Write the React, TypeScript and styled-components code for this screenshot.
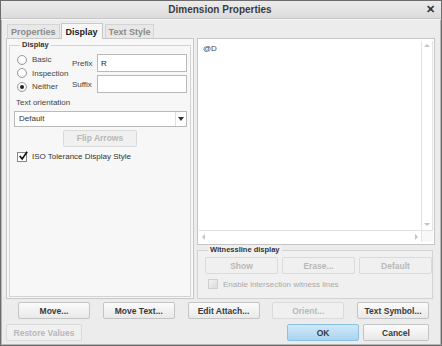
import React from "react";
import styled, { createGlobalStyle } from "styled-components";

const Global = createGlobalStyle`
  html, body { margin: 0; padding: 0; background: #ffffff; }
  * { box-sizing: border-box; }
  body { font-family: "Liberation Sans", Arial, sans-serif; font-size: 8px; color: #333; }
`;

const Dialog = styled.div`
  width: 442px;
  height: 346px;
  border: 1px solid #6c6c6c;
  background: #ececec;
  display: flex;
  flex-direction: column;
  box-shadow: inset 0 0 0 1px #b4b4b4;
`;

const TitleBar = styled.div`
  height: 18px;
  display: grid;
  grid-template-columns: 1fr auto 1fr;
  align-items: center;
  background: linear-gradient(#ebebeb, #dcdcdc);
  border-bottom: 1px solid #c6c6c6;
  padding: 0 4px 0 2px;
`;

const Title = styled.div`
  grid-column: 2;
  font-size: 10px;
  font-weight: bold;
  color: #3c3c3c;
`;

const Close = styled.div`
  grid-column: 3;
  justify-self: end;
  font-size: 11px;
  font-weight: bold;
  color: #333;
  line-height: 1;
  padding-right: 2px;
`;

const Body = styled.div`
  flex: 1;
  display: flex;
  flex-direction: column;
  padding: 2px 5px 0 5px;
  border-top: 1px solid #f7f7f7;
`;

const TabRow = styled.div`
  display: flex;
  align-items: flex-end;
  height: 16px;
  padding-left: 1px;
`;

const Tab = styled.div<{ $active?: boolean }>`
  height: ${(p) => (p.$active ? 16 : 14)}px;
  padding: 0 ${(p) => (p.$active ? 4 : 3)}px;
  margin-right: ${(p) => (p.$active ? 2 : 1)}px;
  display: flex;
  align-items: center;
  font-size: 9px;
  font-weight: bold;
  color: ${(p) => (p.$active ? "#222" : "#8a8a8a")};
  background: ${(p) => (p.$active ? "#f7f7f7" : "#e8e8e8")};
  border: 1px solid ${(p) => (p.$active ? "#c8c8c8" : "#d4d4d4")};
  border-bottom: none;
  margin-bottom: ${(p) => (p.$active ? -1 : 0)}px;
  position: relative;
  z-index: ${(p) => (p.$active ? 1 : 0)};
`;

const MainRow = styled.div`
  display: flex;
  gap: 3px;
  height: 261px;
`;

const LeftPanel = styled.div`
  width: 188px;
  border: 1px solid #c8c8c8;
  background: #f7f7f7;
  display: flex;
  flex-direction: column;
  padding: 0 2px 1px 2px;
`;

const Group = styled.div<{ $fill?: boolean }>`
  border: 1px solid #d2d2d2;
  margin-top: 6px;
  flex: ${(p) => (p.$fill ? 1 : "none")};
  display: flex;
  flex-direction: column;
`;

const Legend = styled.div<{ $bg: string; $left: number }>`
  align-self: flex-start;
  margin: -6px 0 0 ${(p) => p.$left}px;
  padding: 0 2px;
  height: 10px;
  line-height: 10px;
  font-size: 7.5px;
  font-weight: bold;
  color: #333;
  background: ${(p) => p.$bg};
`;

const TopSection = styled.div`
  display: flex;
  padding-left: 7px;
  margin-top: 3px;
`;

const RadioList = styled.div`
  width: 55px;
  display: flex;
  flex-direction: column;
`;

const RadioRow = styled.label`
  height: 13.5px;
  display: flex;
  align-items: center;
  gap: 5px;
  white-space: nowrap;
  color: #444;
`;

const RadioDot = styled.span<{ $checked?: boolean }>`
  width: 10px;
  height: 10px;
  border-radius: 50%;
  border: 1px solid #9c9c9c;
  background: radial-gradient(circle at 50% 40%, #ffffff 40%, #e4e4e4 100%);
  display: flex;
  align-items: center;
  justify-content: center;
  flex: none;
  &::after {
    content: "";
    width: 4px;
    height: 4px;
    border-radius: 50%;
    background: ${(p) => (p.$checked ? "#222" : "transparent")};
  }
`;

const FieldGrid = styled.div`
  display: grid;
  grid-template-columns: 25px 90px;
  row-gap: 3px;
  margin-top: 1px;
  align-items: center;
`;

const FieldLabel = styled.span`
  color: #444;
`;

const TextInput = styled.div`
  height: 18px;
  background: #ffffff;
  border: 1px solid #b9b9b9;
  display: flex;
  align-items: center;
  padding-left: 3px;
  font-size: 8px;
  color: #222;
`;

const SectionLabel = styled.div`
  height: 10px;
  line-height: 10px;
  margin: 4px 0 0 6px;
  color: #444;
`;

const Select = styled.div`
  height: 16px;
  margin: 3px 3px 0 4px;
  background: #ffffff;
  border: 1px solid #b9b9b9;
  display: flex;
  align-items: center;
`;

const SelectText = styled.span`
  flex: 1;
  padding-left: 4px;
  color: #333;
`;

const SelectArrow = styled.span`
  width: 11px;
  height: 100%;
  border-left: 1px solid #dedede;
  display: flex;
  align-items: center;
  justify-content: center;
  &::after {
    content: "";
    border-left: 3px solid transparent;
    border-right: 3px solid transparent;
    border-top: 4px solid #333;
  }
`;

const Button = styled.div<{ $disabled?: boolean; $primary?: boolean; $w?: number }>`
  width: ${(p) => p.$w ?? 72}px;
  height: 17px;
  display: flex;
  align-items: center;
  justify-content: center;
  font-size: 8.5px;
  font-weight: bold;
  white-space: nowrap;
  border-radius: 2px;
  color: ${(p) => (p.$disabled ? "#b8b8b8" : "#3a3a3a")};
  border: 1px solid
    ${(p) => (p.$primary ? "#8cc0e4" : p.$disabled ? "#dadada" : "#c4c4c4")};
  background: ${(p) =>
    p.$primary
      ? "linear-gradient(#cfe8f8, #a9d4f1)"
      : p.$disabled
      ? "#f0f0f0"
      : "linear-gradient(#fbfbfb, #e9e9e9)"};
`;

const CenterRow = styled.div`
  display: flex;
  justify-content: center;
  margin-top: 3px;
`;

const CheckRow = styled.label<{ $disabled?: boolean; $top: number; $left: number }>`
  height: 10px;
  display: flex;
  align-items: center;
  gap: 5px;
  margin: ${(p) => p.$top}px 0 0 ${(p) => p.$left}px;
  color: ${(p) => (p.$disabled ? "#aaaaaa" : "#333")};
  white-space: nowrap;
`;

const CheckBox = styled.span<{ $disabled?: boolean }>`
  width: 10px;
  height: 10px;
  flex: none;
  border: 1px solid ${(p) => (p.$disabled ? "#cfcfcf" : "#8a8a8a")};
  background: ${(p) =>
    p.$disabled ? "linear-gradient(135deg, #f2f2f2, #dcdcdc)" : "#ffffff"};
  display: flex;
  align-items: center;
  justify-content: center;
  overflow: visible;
`;

const RightCol = styled.div`
  flex: 1;
  display: flex;
  flex-direction: column;
  padding-right: 1px;
`;

const TextArea = styled.div`
  height: 207px;
  border: 1px solid #c6c6c6;
  background: #ffffff;
  display: grid;
  grid-template-columns: 1fr 12px;
  grid-template-rows: 1fr 12px;
  padding: 2px 1px 2px 1px;
`;

const AreaContent = styled.div`
  padding: 3px 0 0 4px;
  font-size: 8px;
  color: #444;
`;

const VScroll = styled.div`
  border-left: 1px solid #e2e2e2;
  border-right: 1px solid #e2e2e2;
  display: flex;
  flex-direction: column;
  justify-content: space-between;
  align-items: center;
  padding: 3px 0 4px;
`;

const HScroll = styled.div`
  border-top: 1px solid #e2e2e2;
  display: flex;
  justify-content: space-between;
  align-items: center;
  padding: 0 3px 0 3px;
`;

const Corner = styled.div`
  border-top: 1px solid #e2e2e2;
  border-left: 1px solid #e2e2e2;
  background: #f8f8f8;
`;

const Arrow = styled.span<{ $dir: "up" | "down" | "left" | "right" }>`
  width: 0;
  height: 0;
  ${(p) =>
    p.$dir === "up"
      ? "border-left: 3px solid transparent; border-right: 3px solid transparent; border-bottom: 3px solid #c4c4c4;"
      : p.$dir === "down"
      ? "border-left: 3px solid transparent; border-right: 3px solid transparent; border-top: 3px solid #c4c4c4;"
      : p.$dir === "left"
      ? "border-top: 3px solid transparent; border-bottom: 3px solid transparent; border-right: 3px solid #c4c4c4;"
      : "border-top: 3px solid transparent; border-bottom: 3px solid transparent; border-left: 3px solid #c4c4c4;"}
`;

const WitnessGroup = styled(Group)`
  margin-top: 5px;
  margin-right: 2px;
  flex: 1;
  padding-bottom: 6px;
  background: #f0f0f0;
`;

const WitnessButtons = styled.div`
  display: flex;
  gap: 4px;
  margin: 2px 0 0 7px;
`;

const ButtonRow = styled.div`
  display: flex;
  justify-content: space-between;
  padding: 0 7px 0 12px;
  margin-top: 3px;
`;

const BottomRow = styled.div`
  display: flex;
  align-items: center;
  margin-top: 5px;
  padding-right: 7px;
  gap: 4px;
`;

const Spacer = styled.div`
  flex: 1;
`;

const Check = () => (
  <svg width="12" height="12" viewBox="0 0 12 12" style={{ marginTop: -2, marginRight: -2 }}>
    <path d="M2 6 L5 9.5 L11 1" fill="none" stroke="#111" strokeWidth="2" />
  </svg>
);

export default function App() {
  return (
    <>
      <Global />
      <Dialog>
        <TitleBar>
          <Title>Dimension Properties</Title>
          <Close>✕</Close>
        </TitleBar>
        <Body>
          <TabRow>
            <Tab>Properties</Tab>
            <Tab $active>Display</Tab>
            <Tab>Text Style</Tab>
          </TabRow>
          <MainRow>
            <LeftPanel>
              <Group $fill>
                <Legend $bg="#f7f7f7" $left={10}>Display</Legend>
                <TopSection>
                  <RadioList>
                    <RadioRow><RadioDot />Basic</RadioRow>
                    <RadioRow><RadioDot />Inspection</RadioRow>
                    <RadioRow><RadioDot $checked />Neither</RadioRow>
                  </RadioList>
                  <FieldGrid>
                    <FieldLabel>Prefix</FieldLabel>
                    <TextInput>R</TextInput>
                    <FieldLabel>Suffix</FieldLabel>
                    <TextInput />
                  </FieldGrid>
                </TopSection>
                <SectionLabel>Text orientation</SectionLabel>
                <Select>
                  <SelectText>Default</SelectText>
                  <SelectArrow />
                </Select>
                <CenterRow>
                  <Button $disabled $w={74}>Flip Arrows</Button>
                </CenterRow>
                <CheckRow $top={5} $left={7}>
                  <CheckBox><Check /></CheckBox>
                  ISO Tolerance Display Style
                </CheckRow>
              </Group>
            </LeftPanel>
            <RightCol>
              <TextArea>
                <AreaContent>@D</AreaContent>
                <VScroll>
                  <Arrow $dir="up" />
                  <Arrow $dir="down" />
                </VScroll>
                <HScroll>
                  <Arrow $dir="left" />
                  <Arrow $dir="right" />
                </HScroll>
                <Corner />
              </TextArea>
              <WitnessGroup>
                <Legend $bg="#f0f0f0" $left={10}>Witnessline display</Legend>
                <WitnessButtons>
                  <Button $disabled $w={73}>Show</Button>
                  <Button $disabled $w={73}>Erase...</Button>
                  <Button $disabled $w={73}>Default</Button>
                </WitnessButtons>
                <CheckRow $disabled $top={5} $left={10}>
                  <CheckBox $disabled />
                  Enable intersection witness lines
                </CheckRow>
              </WitnessGroup>
            </RightCol>
          </MainRow>
          <ButtonRow>
            <Button>Move...</Button>
            <Button>Move Text...</Button>
            <Button>Edit Attach...</Button>
            <Button $disabled>Orient...</Button>
            <Button>Text Symbol...</Button>
          </ButtonRow>
          <BottomRow>
            <Button $disabled $w={76}>Restore Values</Button>
            <Spacer />
            <Button $primary $w={72}>OK</Button>
            <Button $w={66}>Cancel</Button>
          </BottomRow>
        </Body>
      </Dialog>
    </>
  );
}
